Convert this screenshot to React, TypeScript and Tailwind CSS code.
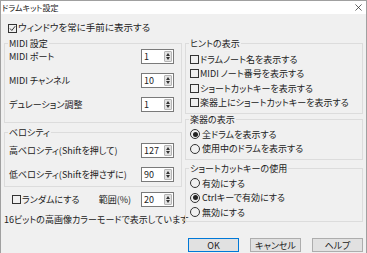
import type { ReactNode } from 'react'

const jp = "font-['Noto_Sans_CJK_JP',sans-serif] [font-feature-settings:'palt']"

function Check({ checked = false }: { checked?: boolean }) {
  return (
    <span className="relative mr-[1px] inline-block h-[9px] w-[9px] shrink-0 border border-[#333]">
      {checked && (
        <svg viewBox="0 0 9 9" className="absolute left-[-1px] top-[-1px] h-[9px] w-[9px]">
          <path d="M2 4.5 L3.8 6.5 L7.2 2.2" fill="none" stroke="#333" strokeWidth="1" />
        </svg>
      )}
    </span>
  )
}

function Radio({ checked = false }: { checked?: boolean }) {
  return (
    <span className="mr-[2px] flex h-[10px] w-[10px] shrink-0 items-center justify-center rounded-full border border-[#333]">
      {checked && <span className="h-[5px] w-[5px] rounded-full bg-[#222]" />}
    </span>
  )
}

function Spin({ v }: { v: string }) {
  return (
    <div className="flex h-[15px] w-[33px] items-center justify-between border border-[#7a7a7a] bg-white pl-[2px] pr-[1px] text-[9px] leading-none">
      <span>{v}</span>
      <span className="flex h-[11px] w-[8px] flex-col items-center justify-center gap-[1px] rounded-[1px] border border-[#b5b5b5] bg-[#e3e3e3]">
        <span className="h-0 w-0 border-x-[2.5px] border-b-[3px] border-x-transparent border-b-[#333]" />
        <span className="h-0 w-0 border-x-[2.5px] border-t-[3px] border-x-transparent border-t-[#333]" />
      </span>
    </div>
  )
}

function Group({ label, className, children }: { label: string; className?: string; children: ReactNode }) {
  return (
    <div className={`relative border border-[#dcdcdc] ${className ?? ''}`}>
      <span className="absolute left-[3px] top-[-6px] bg-[#f0f0f0] px-[1px] text-[9px] leading-[11px]">{label}</span>
      {children}
    </div>
  )
}

function Row({ label, v }: { label: string; v: string }) {
  return (
    <div className="flex h-[24px] items-center justify-between pl-[4px] pr-[7px]">
      <span>{label}</span>
      <Spin v={v} />
    </div>
  )
}

function Opt({ children }: { children: ReactNode }) {
  return <div className="flex h-[14.5px] items-center">{children}</div>
}

function Btn({ label, primary = false }: { label: string; primary?: boolean }) {
  return (
    <button
      className={`flex h-[14px] w-[51px] items-center justify-center bg-[#e1e1e1] text-[9px] leading-none ${
        primary ? 'border border-[#0078d7]' : 'border border-[#adadad]'
      }`}
    >
      {label}
    </button>
  )
}

export default function App() {
  return (
    <div className={`h-[253px] w-[367px] overflow-hidden border-x border-t border-[#a0a0a0] bg-[#f0f0f0] text-[9px] leading-none text-[#222] ${jp}`}>
      <div className="flex h-[13px] items-center justify-between bg-white pr-[4px]">
        <span className="pl-[1px] text-[8px]">ドラムキット設定</span>
        <svg viewBox="0 0 8 8" className="h-[7px] w-[7px]">
          <path d="M0.5 0.5 L7.5 7.5 M7.5 0.5 L0.5 7.5" stroke="#222" strokeWidth="0.8" />
        </svg>
      </div>

      <div className="flex h-[22px] items-center pl-[7px] pt-[6px] text-[9.5px]">
        <Check checked />
        <span>ウィンドウを常に手前に表示する</span>
      </div>

      <div className="mt-[7px] flex gap-[3px] pl-[3px]">
        <div className="flex w-[178px] flex-col">
          <Group label="MIDI 設定" className="pb-[6px]">
            <Row label="MIDI ポート" v="1" />
            <Row label="MIDI チャンネル" v="10" />
            <Row label="デュレーション調整" v="1" />
          </Group>
          <Group label="ベロシティ" className="mt-[9px] pt-[5px]">
            <Row label="高ベロシティ(Shiftを押して)" v="127" />
            <Row label="低ベロシティ(Shiftを押さずに)" v="90" />
          </Group>
          <div className="flex h-[24px] items-center pl-[8px] pr-[8px]">
            <Check />
            <span>ランダムにする</span>
            <span className="ml-auto mr-[10px]">範囲(%)</span>
            <Spin v="20" />
          </div>
          <div className="flex h-[16px] items-center whitespace-nowrap">16ビットの高画像カラーモードで表示しています</div>
        </div>

        <div className="flex w-[178px] flex-col">
          <Group label="ヒントの表示" className="pl-[4px] pt-[8px] pb-[3px]">
            <Opt><Check /><span>ドラムノート名を表示する</span></Opt>
            <Opt><Check /><span>MIDI ノート番号を表示する</span></Opt>
            <Opt><Check /><span>ショートカットキーを表示する</span></Opt>
            <Opt><Check /><span>楽器上にショートカットキーを表示する</span></Opt>
          </Group>
          <Group label="楽器の表示" className="mt-[5px] pl-[4px] pt-[7px] pb-[3px]">
            <Opt><Radio checked /><span>全ドラムを表示する</span></Opt>
            <Opt><Radio /><span>使用中のドラムを表示する</span></Opt>
          </Group>
          <Group label="ショートカットキーの使用" className="mt-[8px] pl-[4px] pt-[7px] pb-[1px]">
            <Opt><Radio /><span>有効にする</span></Opt>
            <Opt><Radio checked /><span>Ctrlキーで有効にする</span></Opt>
            <Opt><Radio /><span>無効にする</span></Opt>
          </Group>
        </div>
      </div>

      <div className="mt-[11px] flex justify-end gap-[11px] pr-[3px]">
        <Btn label="OK" primary />
        <Btn label="キャンセル" />
        <Btn label="ヘルプ" />
      </div>
    </div>
  )
}
